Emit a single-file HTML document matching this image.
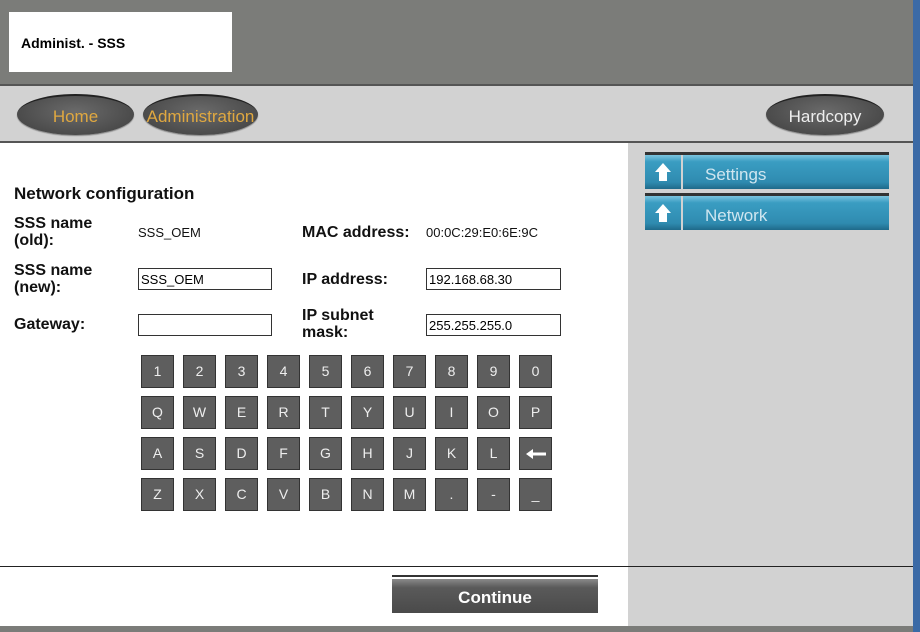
<!DOCTYPE html>
<html><head><meta charset="utf-8"><style>
*{margin:0;padding:0;box-sizing:border-box}
body{width:920px;height:632px;overflow:hidden;position:relative;background:#fff;font-family:"Liberation Sans",Arial,sans-serif}
.a{position:absolute}
#hdr{left:0;top:0;width:913px;height:86px;background:#7b7c79;border-bottom:2px solid #555}
#blue{left:913px;top:0;width:7px;height:632px;background:#3b6aa6}
#title{left:9px;top:12px;width:223px;height:60px;background:#fff;font-weight:bold;font-size:14px;padding:23px 0 0 12px}
#nav{left:0;top:86px;width:913px;height:57px;background:#d2d2d2;border-bottom:2px solid #555}
.ov{position:absolute;top:94px;height:41px;border-radius:50%;background:radial-gradient(ellipse at 50% 40%,#6a6a6a,#3e3e3e);border-top:2px solid #222;color:#e0a840;font-size:17px;text-align:center;line-height:42px;box-shadow:0 1px 1px #888;white-space:nowrap}
#right{left:628px;top:143px;width:285px;height:483px;background:#d2d2d2}
#bot{left:0;top:626px;width:913px;height:6px;background:#7b7c79}
.bar{position:absolute;left:645px;width:244px;height:37px;border-top:3px solid #333}
.bar .ic{position:absolute;left:0;top:0;width:36px;height:34px;background:linear-gradient(#7cc4de,#3a9dc2 20%,#2f8bb0 80%,#1f6a8a)}
.bar .tx{position:absolute;left:38px;top:0;right:0;height:34px;background:linear-gradient(#7cc4de,#3a9dc2 20%,#2f8bb0 80%,#1f6a8a);color:#cfe6f0;font-size:17px;padding:10px 0 0 22px}
.bar svg{position:absolute;left:9px;top:7px}
.lbl{position:absolute;font-weight:bold;font-size:16px;line-height:17px;color:#111}
.val{position:absolute;font-size:13px;color:#111}
.inp{position:absolute;height:22px;border:1px solid #333;background:#fff;font-size:13px;padding:3px 0 0 2px}
.k{position:absolute;width:33px;height:33px;background:#5e5e5e;border:1px solid #333;color:#eee;font-size:14px;text-align:center;line-height:31px}
#cont{left:392px;top:575px;width:206px;height:38px;border-top:2px solid #333}
#cont div{margin-top:2px;height:34px;background:linear-gradient(#8a8a8a,#5a5a5a 25%,#4a4a4a);color:#fff;font-weight:bold;font-size:17px;text-align:center;line-height:38px}
</style></head><body>
<div class="a" id="hdr"></div>
<div class="a" id="blue"></div>
<div class="a" id="title">Administ. - SSS</div>
<div class="a" id="nav"></div>
<div class="ov" style="left:17px;width:117px">Home</div>
<div class="ov" style="left:143px;width:115px">Administration</div>
<div class="ov" style="left:766px;width:118px;color:#eee">Hardcopy</div>
<div class="a" id="right"></div>
<div class="bar" style="top:152px"><div class="ic"><svg width="18" height="20" viewBox="0 0 18 20"><path d="M9 1L1 10H5V19H13V10H17Z" fill="#fff"/></svg></div><div class="tx">Settings</div></div>
<div class="bar" style="top:193px"><div class="ic"><svg width="18" height="20" viewBox="0 0 18 20"><path d="M9 1L1 10H5V19H13V10H17Z" fill="#fff"/></svg></div><div class="tx">Network</div></div>

<div class="lbl" style="left:14px;top:185px;font-size:17px">Network configuration</div>
<div class="lbl" style="left:14px;top:215px">SSS name<br>(old):</div>
<div class="val" style="left:138px;top:225px">SSS_OEM</div>
<div class="lbl" style="left:302px;top:224px">MAC address:</div>
<div class="val" style="left:426px;top:225px">00:0C:29:E0:6E:9C</div>
<div class="lbl" style="left:14px;top:262px">SSS name<br>(new):</div>
<div class="inp" style="left:138px;top:268px;width:134px">SSS_OEM</div>
<div class="lbl" style="left:302px;top:271px">IP address:</div>
<div class="inp" style="left:426px;top:268px;width:135px">192.168.68.30</div>
<div class="lbl" style="left:14px;top:316px">Gateway:</div>
<div class="inp" style="left:138px;top:314px;width:134px"></div>
<div class="lbl" style="left:302px;top:307px">IP subnet<br>mask:</div>
<div class="inp" style="left:426px;top:314px;width:135px">255.255.255.0</div>

<div class="k" style="left:141px;top:355px">1</div><div class="k" style="left:183px;top:355px">2</div><div class="k" style="left:225px;top:355px">3</div><div class="k" style="left:267px;top:355px">4</div><div class="k" style="left:309px;top:355px">5</div><div class="k" style="left:351px;top:355px">6</div><div class="k" style="left:393px;top:355px">7</div><div class="k" style="left:435px;top:355px">8</div><div class="k" style="left:477px;top:355px">9</div><div class="k" style="left:519px;top:355px">0</div>
<div class="k" style="left:141px;top:396px">Q</div><div class="k" style="left:183px;top:396px">W</div><div class="k" style="left:225px;top:396px">E</div><div class="k" style="left:267px;top:396px">R</div><div class="k" style="left:309px;top:396px">T</div><div class="k" style="left:351px;top:396px">Y</div><div class="k" style="left:393px;top:396px">U</div><div class="k" style="left:435px;top:396px">I</div><div class="k" style="left:477px;top:396px">O</div><div class="k" style="left:519px;top:396px">P</div>
<div class="k" style="left:141px;top:437px">A</div><div class="k" style="left:183px;top:437px">S</div><div class="k" style="left:225px;top:437px">D</div><div class="k" style="left:267px;top:437px">F</div><div class="k" style="left:309px;top:437px">G</div><div class="k" style="left:351px;top:437px">H</div><div class="k" style="left:393px;top:437px">J</div><div class="k" style="left:435px;top:437px">K</div><div class="k" style="left:477px;top:437px">L</div><div class="k" style="left:519px;top:437px"><svg width="22" height="12" viewBox="0 0 22 12" style="margin-top:10px"><path d="M1 6L8 1V4.5H21V7.5H8V11Z" fill="#fff"/></svg></div>
<div class="k" style="left:141px;top:478px">Z</div><div class="k" style="left:183px;top:478px">X</div><div class="k" style="left:225px;top:478px">C</div><div class="k" style="left:267px;top:478px">V</div><div class="k" style="left:309px;top:478px">B</div><div class="k" style="left:351px;top:478px">N</div><div class="k" style="left:393px;top:478px">M</div><div class="k" style="left:435px;top:478px">.</div><div class="k" style="left:477px;top:478px">-</div><div class="k" style="left:519px;top:478px">_</div>

<div class="a" style="left:0;top:566px;width:913px;height:1px;background:#222"></div>
<div class="a" id="cont"><div>Continue</div></div>
<div class="a" id="bot"></div>
</body></html>
